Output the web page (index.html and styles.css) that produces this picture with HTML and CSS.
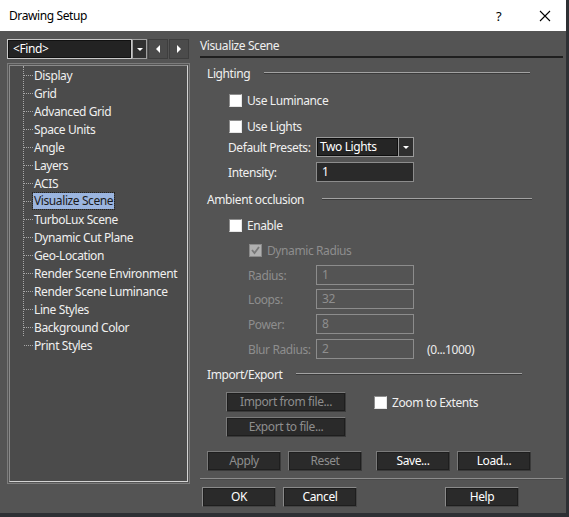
FILE: index.html
```html
<!DOCTYPE html>
<html>
<head>
	<meta charset="utf-8">
	<title>Drawing Setup</title>
	<link rel="stylesheet" href="styles.css">
</head>
<body>
	<div id="window">
		<div id="titlebar">
			<span class="title">Drawing Setup</span>
			<span class="help-btn">?</span>
			<span class="close-btn">
				<svg width="12" height="12" viewBox="0 0 12 12"><path d="M1 1 L11 11 M11 1 L1 11" stroke="#000" stroke-width="1.1" fill="none"/></svg>
			</span>
		</div>

		<div id="content">
			<div id="left">
				<div class="find-row">
					<div class="find-combo">
						<span class="find-text">&lt;Find&gt;</span>
						<span class="drop drop-find"><i class="tri-down"></i></span>
					</div>
					<span class="nav-btn"><i class="tri-left"></i></span>
					<span class="nav-btn"><i class="tri-right"></i></span>
				</div>

				<div class="tree">
					<div class="tree-inner">
						<ul class="tree-list">
							<li>Display</li>
							<li>Grid</li>
							<li>Advanced Grid</li>
							<li>Space Units</li>
							<li>Angle</li>
							<li>Layers</li>
							<li>ACIS</li>
							<li><span class="selected">Visualize Scene</span></li>
							<li>TurboLux Scene</li>
							<li>Dynamic Cut Plane</li>
							<li>Geo-Location</li>
							<li>Render Scene Environment</li>
							<li>Render Scene Luminance</li>
							<li>Line Styles</li>
							<li>Background Color</li>
							<li>Print Styles</li>
						</ul>
					</div>
				</div>
			</div>

			<div id="right">
				<div class="page-title">Visualize Scene</div>

				<div class="group-head gh-light"><span>Lighting</span><i class="etch"></i></div>

				<div class="row r-lum">
					<span class="check"></span><span class="lbl">Use Luminance</span>
				</div>
				<div class="row r-lights">
					<span class="check"></span><span class="lbl">Use Lights</span>
				</div>
				<div class="row r-presets">
					<span class="field-lbl">Default Presets:</span>
					<div class="combo">
						<span class="combo-text">Two Lights</span>
						<span class="drop"><i class="tri-down"></i></span>
					</div>
				</div>
				<div class="row r-int">
					<span class="field-lbl">Intensity:</span>
					<span class="input">1</span>
				</div>

				<div class="group-head gh-amb"><span>Ambient occlusion</span><i class="etch"></i></div>

				<div class="row r-enable">
					<span class="check"></span><span class="lbl">Enable</span>
				</div>
				<div class="row r-dyn">
					<span class="check disabled">
						<svg width="11" height="11" viewBox="0 0 11 11"><path d="M2 5 L4.5 8 L9 2" stroke="#787878" stroke-width="1.8" fill="none"/></svg>
					</span>
					<span class="lbl dim">Dynamic Radius</span>
				</div>
				<div class="row r-sub">
					<span class="field-lbl sub dim">Radius:</span>
					<span class="input off">1</span>
				</div>
				<div class="row r-sub r-loops">
					<span class="field-lbl sub dim">Loops:</span>
					<span class="input off">32</span>
				</div>
				<div class="row r-sub">
					<span class="field-lbl sub dim">Power:</span>
					<span class="input off">8</span>
				</div>
				<div class="row r-sub">
					<span class="field-lbl sub dim">Blur Radius:</span>
					<span class="input off">2</span>
					<span class="range">(0...1000)</span>
				</div>

				<div class="group-head gh-io"><span>Import/Export</span><i class="etch"></i></div>

				<div class="io">
					<div class="io-btns">
						<span class="btn wide dim">Import from file...</span>
						<span class="btn wide dim">Export to file...</span>
					</div>
					<div class="row r-zoom">
						<span class="check"></span><span class="lbl">Zoom to Extents</span>
					</div>
				</div>

				<div class="btn-row apply-row">
					<span class="btn dim">Apply</span>
					<span class="btn dim">Reset</span>
					<span class="btn gap-l">Save...</span>
					<span class="btn">Load...</span>
				</div>

				<div class="separator"></div>

				<div class="btn-row ok-row">
					<span class="btn">OK</span>
					<span class="btn">Cancel</span>
					<span class="btn help">Help</span>
				</div>
			</div>
		</div>
	</div>
</body>
</html>
```

FILE: styles.css
```css
	body{
		margin: 0;
		background-color: #2e3034;
		font-family: "Noto Sans", "Open Sans", sans-serif;
		font-size: 12px;
		letter-spacing: -0.4px;
		color: #f0f0f0;
	}
	#window
	{
		width: 566px;
		height: 513px;
		background-color: #545454;
		overflow: hidden;
	}
	#titlebar
	{
		height: 31px;
		background: #fff;
		color: #000;
		display: flex;
		align-items: center;
	}
	.title
	{
		margin-left: 9px;
		flex: 1;
	}
	.help-btn
	{
		width: 14px;
		font-size: 13px;
		margin-right: 29px;
	}
	.close-btn
	{
		display: flex;
		width: 12px;
		margin-right: 15px;
	}
	#content
	{
		display: flex;
	}
	#left
	{
		width: 183px;
		margin-left: 7px;
		padding-top: 8px;
	}
	.find-row
	{
		display: flex;
		height: 20px;
	}
	.find-combo
	{
		width: 140px;
		display: flex;
		box-sizing: border-box;
	}
	.find-text
	{
		flex: 1;
		background: #232323;
		border: 1px solid #c8c8c8;
		box-shadow: inset 0 0 0 1px #111;
		padding-left: 5px;
		line-height: 18px;
		color: #fff;
	}
	.drop
	{
		width: 14px;
		background: #333;
		border: 1px solid #9a9a9a;
		display: flex;
		align-items: center;
		justify-content: center;
		box-sizing: border-box;
	}
	.drop-find
	{
		width: 15px;
		border-color: #a0a0a0;
		background: #303030;
	}
	.tri-down
	{
		width: 0;
		height: 0;
		border-left: 3px solid transparent;
		border-right: 3px solid transparent;
		border-top: 3px solid #fff;
	}
	.nav-btn
	{
		width: 20px;
		margin-left: 1px;
		background: #4b4b4b;
		border: 1px solid #3e3e3e;
		box-sizing: border-box;
		display: flex;
		align-items: center;
		justify-content: center;
	}
	.tri-left
	{
		width: 0;
		height: 0;
		border-top: 4px solid transparent;
		border-bottom: 4px solid transparent;
		border-right: 4px solid #fff;
	}
	.tri-right
	{
		width: 0;
		height: 0;
		border-top: 4px solid transparent;
		border-bottom: 4px solid transparent;
		border-left: 4px solid #fff;
	}
	.tree
	{
		margin-top: 4px;
		height: 421px;
		border: 1px solid #7c7c7c;
		padding: 1px;
		box-sizing: border-box;
	}
	.tree-inner
	{
		height: 100%;
		background: #4b4b4b;
		border: 1px solid #d4d4d4;
		border-top-color: #8a8a8a;
		border-left-color: #8a8a8a;
		box-sizing: border-box;
		padding-top: 9px;
	}
	.tree-list
	{
		list-style: none;
		margin: 0 0 0 13px;
		padding: 0;
		height: 270px;
		border-left: 1px dotted #a8a8a8;
	}
	.tree-list li
	{
		height: 18px;
		display: flex;
		align-items: center;
		white-space: nowrap;
	}
	.tree-list li:first-child
	{
		margin-top: -9px;
	}
	.tree-list li::before
	{
		content: "";
		width: 9px;
		border-top: 1px dotted #a8a8a8;
		margin-right: 1px;
	}
	.selected
	{
		background: #9bb5df;
		color: #1a1a1a;
		outline: 1px dotted #222;
		padding: 0 1px;
		margin-left: -1px;
		line-height: 16px;
	}
	#right
	{
		width: 363px;
		margin-left: 10px;
	}
	.page-title
	{
		padding-top: 5px;
		height: 20px;
		line-height: 20px;
		border-bottom: 2px solid #1f1f1f;
	}
	.group-head
	{
		height: 20px;
		display: flex;
		align-items: center;
		padding-left: 7px;
		margin-top: 5px;
	}
	.gh-amb
	{
		margin-top: 7px;
	}
	.etch
	{
		flex: 1;
		height: 0;
		border-top: 1px solid #a2a2a2;
		border-bottom: 1px solid #3a3a3a;
		margin-left: 14px;
		margin-right: 33px;
	}
	.gh-amb .etch
	{
		margin-left: 18px;
		margin-right: 31px;
	}
	.gh-io .etch
	{
		margin-left: 14px;
		margin-right: 41px;
	}
	.row
	{
		height: 20px;
		display: flex;
		align-items: center;
		margin-top: 5px;
		white-space: nowrap;
	}
	.r-lum { margin-top: 7px; padding-left: 29px; }
	.r-lights { margin-top: 6px; padding-left: 29px; }
	.r-presets { margin-top: 1px; }
	.r-enable { margin-top: 6px; padding-left: 29px; }
	.r-dyn { padding-left: 49px; }
	.r-loops { margin-top: 4px; }
	.check
	{
		width: 13px;
		height: 13px;
		flex-shrink: 0;
		background: #fff;
		border: 1px solid #8e8e8e;
		border-right-color: #e6e6e6;
		border-bottom-color: #e6e6e6;
		box-sizing: border-box;
		display: flex;
		align-items: center;
		justify-content: center;
	}
	.check.disabled
	{
		background: #b0b0b0;
		border-color: #8a8a8a;
	}
	.lbl
	{
		margin-left: 5px;
	}
	.dim
	{
		color: #8e8e8e;
	}
	.field-lbl
	{
		width: 88px;
		flex-shrink: 0;
		padding-left: 28px;
	}
	.field-lbl.sub
	{
		width: 68px;
		padding-left: 48px;
	}
	.combo
	{
		width: 98px;
		height: 20px;
		display: flex;
		border: 1px solid #9a9a9a;
		box-sizing: border-box;
	}
	.combo-text
	{
		flex: 1;
		background: #252525;
		border: 1px solid #0e0e0e;
		padding-left: 2px;
		line-height: 16px;
		color: #fff;
	}
	.combo .drop
	{
		width: 15px;
		border: none;
		border-left: 1px solid #9a9a9a;
		background: #2f2f2f;
	}
	.input
	{
		width: 98px;
		height: 20px;
		box-sizing: border-box;
		background: #2a2a2a;
		border: 1px solid #8c8c8c;
		padding-left: 5px;
		line-height: 18px;
		color: #fff;
	}
	.input.off
	{
		background: #545454;
		color: #8e8e8e;
	}
	.range
	{
		margin-left: 13px;
		color: #ececec;
	}
	.io
	{
		display: flex;
		padding-left: 26px;
		margin-top: 8px;
	}
	.io-btns
	{
		display: flex;
		flex-direction: column;
		gap: 5px;
	}
	.btn
	{
		width: 74px;
		height: 20px;
		box-sizing: border-box;
		background: #2a2a2a;
		border: 1px solid #7a7a7a;
		border-right-color: #3a3a3a;
		border-bottom-color: #3a3a3a;
		box-shadow: inset 0 0 0 1px #1e1e1e;
		text-align: center;
		line-height: 18px;
		color: #fff;
	}
	.btn.dim
	{
		color: #8e8e8e;
	}
	.btn.wide
	{
		width: 120px;
	}
	.r-zoom
	{
		margin-top: 0;
		margin-left: 28px;
		height: 20px;
		padding-left: 0;
	}
	.btn-row
	{
		display: flex;
		gap: 7px;
	}
	.apply-row
	{
		margin-top: 14px;
		padding-left: 7px;
	}
	.gap-l
	{
		margin-left: 7px;
	}
	.separator
	{
		margin-top: 7px;
		height: 0;
		border-top: 1px solid #8c8c8c;
		border-bottom: 1px solid #4a4a4a;
	}
	.ok-row
	{
		margin-top: 7px;
		padding-left: 2px;
	}
	.ok-row .btn
	{
		border-color: #8a8a8a;
		border-right-color: #444;
		border-bottom-color: #444;
	}
	.help
	{
		margin-left: 81px;
	}
```
